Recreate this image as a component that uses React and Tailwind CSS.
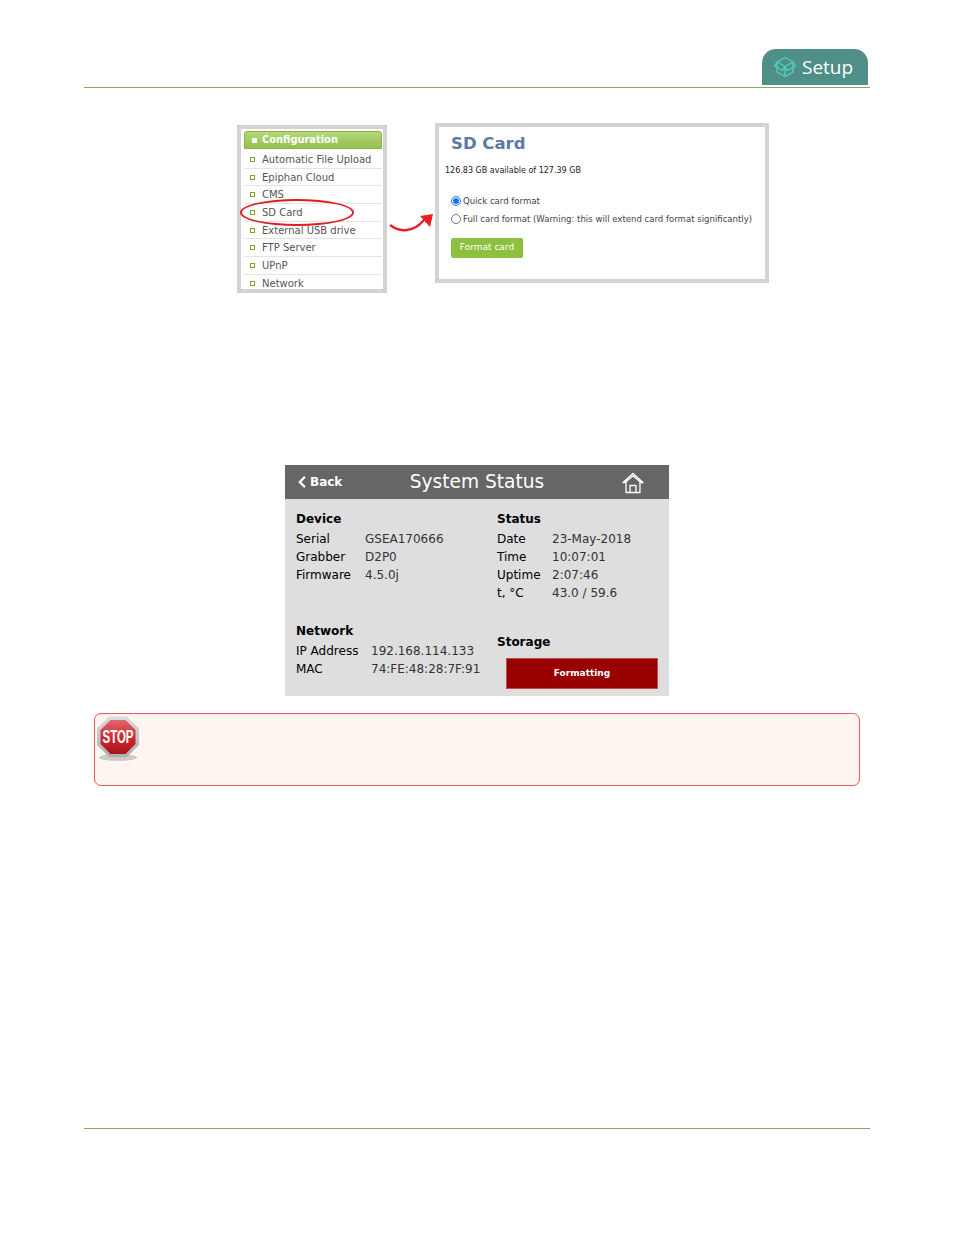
import { ChevronLeft } from 'lucide-react'

const menuItems = ['Automatic File Upload', 'Epiphan Cloud', 'CMS', 'SD Card', 'External USB drive', 'FTP Server', 'UPnP', 'Network']

const device = [
  ['Serial', 'GSEA170666'],
  ['Grabber', 'D2P0'],
  ['Firmware', '4.5.0j'],
]

const status = [
  ['Date', '23-May-2018'],
  ['Time', '10:07:01'],
  ['Uptime', '2:07:46'],
  ['t, °C', '43.0 / 59.6'],
]

const network = [
  ['IP Address', '192.168.114.133'],
  ['MAC', '74:FE:48:28:7F:91'],
]

function BoxIcon() {
  return (
    <svg width="24" height="24" viewBox="0 0 24 24" fill="none" stroke="#4fd1bd" strokeWidth="1.4" strokeLinejoin="round">
      <path d="M12 2.5 L20 7 L20 17 L12 21.5 L4 17 L4 7 Z" />
      <path d="M4 7 L12 11.5 L20 7" />
      <path d="M12 11.5 L12 21.5" />
      <path d="M4 7 L1.5 11 L9.5 15.5 L12 11.5 L14.5 15.5 L22.5 11 L20 7" />
    </svg>
  )
}

function HomeIcon() {
  return (
    <svg width="22" height="22" viewBox="0 0 22 22" fill="none" stroke="#fff" strokeWidth="1.3" strokeLinejoin="round" strokeLinecap="round">
      <path d="M1 10.5 L11 1.5 L21 10.5 L19 10.5 L11 3.8 L3 10.5 Z" />
      <path d="M4 9.5 L4 20.5 L18 20.5 L18 9.5" />
      <path d="M8 20.5 L8 13.5 L14 13.5 L14 20.5" />
    </svg>
  )
}

function StopIcon() {
  return (
    <svg width="44" height="46" viewBox="0 0 44 46">
      <defs>
        <linearGradient id="stopRed" x1="0" y1="0" x2="0" y2="1">
          <stop offset="0" stopColor="#e2686c" />
          <stop offset="0.5" stopColor="#cf2a30" />
          <stop offset="1" stopColor="#a81419" />
        </linearGradient>
        <linearGradient id="stopRim" x1="0" y1="0" x2="0" y2="1">
          <stop offset="0" stopColor="#dcdcdc" />
          <stop offset="1" stopColor="#aeaeae" />
        </linearGradient>
      </defs>
      <ellipse cx="22" cy="41.5" rx="19" ry="3.5" fill="#cfcac6" />
      <polygon points="13,0.5 31,0.5 43,12.5 43,29 31,41 13,41 1,29 1,12.5" fill="url(#stopRim)" />
      <polygon points="14.5,4 29.5,4 39.5,14 39.5,28 29.5,38 14.5,38 4.5,28 4.5,14" fill="url(#stopRed)" />
      <text transform="translate(22 27) scale(0.82 1.35)" textAnchor="middle" fill="#fff" fontFamily="'Liberation Sans', sans-serif" fontWeight="700" fontSize="14">STOP</text>
    </svg>
  )
}

function InfoRows({ rows, labelWidth }) {
  return rows.map(([label, value]) => (
    <div key={label} className="flex h-[18px] items-center">
      <span className={labelWidth}>{label}</span>
      <span className="text-[#333]">{value}</span>
    </div>
  ))
}

export default function App() {
  return (
    <div className="w-[954px] h-[1235px] bg-white px-[84px] font-['DejaVu_Sans',sans-serif] overflow-hidden">
      <header className="h-[88px] flex justify-end items-end pr-[2px] border-b border-[#8aa84f]">
        <div className="w-[106px] h-[36px] mb-[2px] rounded-t-[14px] bg-[#4f8f87] flex items-center gap-[5px] pl-[11px] text-white font-['Open_Sans',sans-serif] text-[19px]">
          <BoxIcon />
          <span className="mt-[1px]">Setup</span>
        </div>
      </header>

      <section className="h-[377px] pt-[35px]">
        <div className="flex items-start ml-[153px]">
          <div className="relative mt-[2px] w-[150px] h-[168px] border-4 border-[#d3d3d3] pl-[3px] pr-[1px] pt-[2px]">
            <div className="h-[18px] flex items-center gap-[5px] pl-[7px] rounded-t-[3px] border border-[#8fb33f] bg-gradient-to-b from-[#b4d77b] to-[#93c04e] text-white text-[9.9px] font-bold">
              <span className="w-[5px] h-[5px] bg-white" />
              <span>Configuration</span>
            </div>
            <div className="h-[142px] pt-[2px] overflow-hidden">
              {menuItems.map(item => (
                <div key={item} className="h-[17.7px] flex items-center gap-[7px] pl-[6px] border-b border-[#e4e4e4] text-[10px] text-[#555]">
                  <span className="w-[5px] h-[5px] border border-[#7c9f2e]" />
                  <span>{item}</span>
                </div>
              ))}
            </div>
            <div className="absolute -left-[1px] top-[70px] w-[114px] h-[27px] rounded-[50%] border-2 border-[#e31b23]" />
          </div>

          <svg width="48" height="24" viewBox="0 0 48 24" className="ml-[1px] mt-[89px]" fill="none">
            <path d="M2 13 C 12 21, 26 20, 36 8" stroke="#ee1c25" strokeWidth="2.4" />
            <polygon points="32,4 45,2 42,15" fill="#ee1c25" />
          </svg>

          <div className="w-[334px] h-[160px] border-4 border-[#d3d3d3] px-[12px] -ml-[1px]">
            <h2 className="text-[#5b7aa5] text-[16.5px] font-bold leading-[20px] mt-[7px]">SD Card</h2>
            <p className="text-[8px] text-[#222] -ml-[6px] mt-[12px] leading-[10px]">126.83 GB available of 127.39 GB</p>
            <div className="mt-[20px] flex flex-col gap-[8px] text-[8.55px] text-[#444]">
              <label className="flex items-center gap-[2px] h-[10px]">
                <span className="w-[10px] h-[10px] rounded-full border border-[#1a73e8] flex items-center justify-center">
                  <span className="w-[6px] h-[6px] rounded-full bg-[#1a73e8]" />
                </span>
                Quick card format
              </label>
              <label className="flex items-center gap-[2px] h-[10px] whitespace-nowrap">
                <span className="w-[10px] h-[10px] rounded-full border border-[#767676]" />
                Full card format (Warning: this will extend card format significantly)
              </label>
            </div>
            <button className="mt-[14px] w-[72px] h-[20px] rounded-[2px] bg-[#8dc03f] text-white text-[9px]">Format card</button>
          </div>
        </div>
      </section>

      <section className="ml-[201px] w-[384px] h-[231px] bg-[#dedede] text-[12px] text-black">
        <div className="h-[34px] bg-[#666] text-white relative flex items-center justify-center">
          <div className="absolute left-[8px] top-0 h-full flex items-center text-[12px] font-bold">
            <ChevronLeft size={18} strokeWidth={3.2} className="-mr-[1px]" />
            <span>Back</span>
          </div>
          <span className="text-[18.6px]">System Status</span>
          <div className="absolute right-[25px] top-[7px]"><HomeIcon /></div>
        </div>
        <div className="flex pl-[11px]">
          <div className="w-[201px]">
            <h3 className="font-bold h-[18px] mt-[11px] mb-[2px] leading-[18px]">Device</h3>
            <InfoRows rows={device} labelWidth="w-[69px]" />
            <h3 className="font-bold h-[18px] mt-[38px] mb-[2px] leading-[18px]">Network</h3>
            <InfoRows rows={network} labelWidth="w-[75px]" />
          </div>
          <div className="flex-1">
            <h3 className="font-bold h-[18px] mt-[11px] mb-[2px] leading-[18px]">Status</h3>
            <InfoRows rows={status} labelWidth="w-[55px]" />
            <h3 className="font-bold h-[18px] mt-[31px] leading-[18px]">Storage</h3>
            <div className="mt-[7px] ml-[9px] w-[152px] h-[31px] bg-[#990000] border border-[#b85050] text-white text-[9px] font-bold flex items-center justify-center">Formatting</div>
          </div>
        </div>
      </section>

      <div className="mt-[17px] ml-[10px] w-[766px] h-[73px] rounded-[7px] border-[1.5px] border-[#e8575d] bg-[#fef5f1] pl-[1px] pt-[2px]">
        <StopIcon />
      </div>

      <div className="mt-[342px] border-t border-[#8aa84f]" />
    </div>
  )
}
